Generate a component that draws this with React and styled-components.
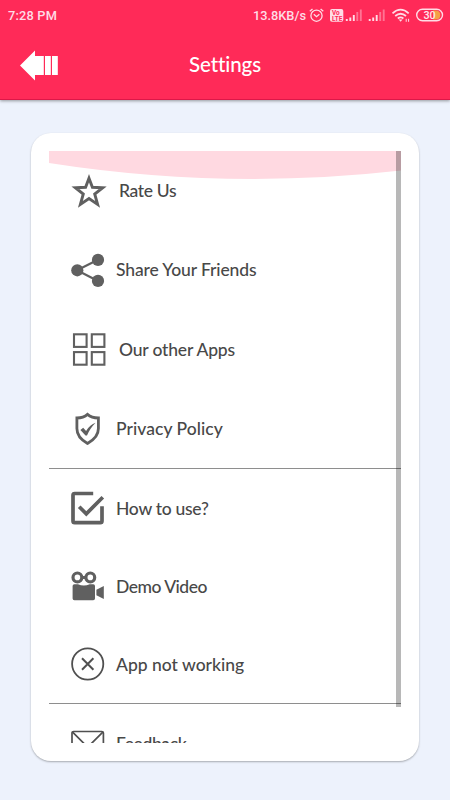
import React from 'react';
import styled, { createGlobalStyle } from 'styled-components';

const iconColor = '#606060';

const GlobalStyle = createGlobalStyle`
  * {
    box-sizing: border-box;
  }
  body {
    margin: 0;
    background: #edf2fc;
  }
`;

const Screen = styled.div`
  display: flex;
  flex-direction: column;
  width: 450px;
  height: 800px;
  overflow: hidden;
  background: #edf2fc;
`;

const Header = styled.header`
  flex: none;
  height: 100px;
  color: #fff;
  background: #ff2a58;
  border-bottom: 1px solid #dc1848;
  box-shadow: 0 1px 3px rgba(0, 0, 0, 0.38);
`;

const StatusBar = styled.div`
  display: flex;
  align-items: center;
  justify-content: space-between;
  height: 30px;
  padding: 0 6px 0 8px;
  color: #ffdce6;
  font-family: Roboto, sans-serif;
  font-size: 12.8px;
  font-weight: 500;
  letter-spacing: 0.2px;
`;

const StatusGroup = styled.div`
  display: flex;
  align-items: center;
  gap: 2px;
  height: 30px;
  letter-spacing: 0;
`;

const Toolbar = styled.div`
  display: grid;
  grid-template-columns: 80px 1fr 80px;
  align-items: center;
  height: 70px;
`;

const BackButton = styled.button`
  display: flex;
  margin: 0;
  padding: 0 0 0 20px;
  border: 0;
  background: none;
`;

const Title = styled.h1`
  margin: 0 0 2px;
  font-family: Lato, sans-serif;
  font-size: 20.5px;
  font-weight: 500;
  font-variant-ligatures: none;
  letter-spacing: -0.1px;
  text-align: center;
`;

const Card = styled.main`
  width: 388px;
  height: 628px;
  margin: 33px 0 0 31px;
  padding: 18px;
  border-radius: 20px;
  background: #fff;
  box-shadow: 0 1px 2px rgba(0, 0, 0, 0.3);
`;

const ScrollArea = styled.div`
  position: relative;
  height: 592px;
  overflow: hidden;
`;

const Wave = styled.svg`
  position: absolute;
  top: 0;
  left: 0;
`;

const ScrollThumb = styled.div`
  position: absolute;
  top: 0;
  right: 0;
  width: 5px;
  height: 556px;
  background: rgba(0, 0, 0, 0.28);
`;

const Group = styled.div`
  position: relative;
  border-bottom: 1px solid #8e8e8e;
`;

const Row = styled.div`
  display: flex;
  align-items: center;
  height: ${props => props.$height}px;
  padding-left: ${props => (props.$inset ? 24 : 22)}px;
`;

const Icon = styled.svg`
  flex: none;
  width: 34px;
  height: 34px;
  overflow: visible;
  color: ${iconColor};
`;

const Label = styled.span`
  margin-left: ${props => (props.$inset ? 12 : 11)}px;
  padding-top: 1px;
  color: #484848;
  font-family: Lato, sans-serif;
  font-size: 17.5px;
  font-weight: 500;
  line-height: 24px;
  letter-spacing: ${props => props.$spacing || 0}px;
  white-space: nowrap;
`;

const StarIcon = () => (
  <Icon viewBox="0 0 34 34" fill="none" stroke="currentColor" strokeWidth="2.9">
    <path d="M16 4.2 L19.4 13.3 L29.7 13.7 L21.7 20 L24.6 30.4 L16 24.6 L7.4 30.4 L10.3 20 L2.4 13.7 L12.6 13.3 Z" />
  </Icon>
);

const ShareIcon = () => (
  <Icon viewBox="0 0 34 34" fill="currentColor">
    <path d="M27 6.8 L6 17.3 L27 28" fill="none" stroke="currentColor" strokeWidth="2.2" />
    <circle cx="27" cy="6.9" r="6.1" />
    <circle cx="6.3" cy="17.3" r="6.1" />
    <circle cx="27" cy="27.9" r="6.1" />
  </Icon>
);

const AppsIcon = () => (
  <Icon viewBox="0 0 34 34" fill="none" stroke="currentColor" strokeWidth="2.1">
    <rect x="1" y="2.3" width="12.6" height="12.6" />
    <rect x="18.8" y="2.3" width="12.6" height="12.6" />
    <rect x="1" y="20.1" width="12.6" height="12.6" />
    <rect x="18.8" y="20.1" width="12.6" height="12.6" />
  </Icon>
);

const ShieldIcon = () => (
  <Icon viewBox="0 0 34 34">
    <path
      d="M16.5 3.4 Q12.5 7 5.9 7 V17.6 C5.9 25 10 29 16.5 32.4 C23 29 27.4 25 27.4 17.6 V7 Q20.6 7 16.5 3.4 Z"
      fill="none"
      stroke="currentColor"
      strokeWidth="2.8"
    />
    <path d="M9.4 18.9 L12.2 16.8 L15.1 19.9 C17.8 15.9 20.8 13.3 24.6 11.8 C21 15.6 18.3 19.3 16 24.4 H14.5 Z" fill="currentColor" />
  </Icon>
);

const CheckIcon = () => (
  <Icon viewBox="0 0 34 34" fill="none" stroke="currentColor" strokeWidth="3.7">
    <path d="M22.2 2.5 H3.7 Q2 2.5 2 4.2 V30 Q2 31.7 3.7 31.7 H29.3 Q31 31.7 31 30 V15.2" />
    <path d="M8.2 15.8 L15.3 22.8 L31.8 6.2" />
  </Icon>
);

const VideoIcon = () => (
  <Icon viewBox="0 0 34 34" fill="currentColor">
    <circle cx="6.4" cy="8.4" r="4.4" fill="none" stroke="currentColor" strokeWidth="3.2" />
    <circle cx="19.3" cy="8.4" r="4.4" fill="none" stroke="currentColor" strokeWidth="3.2" />
    <rect x="11" y="7" width="4" height="3" />
    <path d="M3.4 15.2 H7 Q12.8 17.6 18.7 15.2 H22.2 Q24 15.2 24 17 V29.5 Q24 31.3 22.2 31.3 H3.4 Q1.6 31.3 1.6 29.5 V17 Q1.6 15.2 3.4 15.2 Z" />
    <path d="M25.4 20.7 L32.8 16.9 V29.9 L25.4 26.3 Z" />
  </Icon>
);

const CloseIcon = () => (
  <Icon viewBox="0 0 34 34" fill="none" stroke="#505050" strokeWidth="1.8">
    <circle cx="16.7" cy="17" r="15.6" />
    <path d="M11 11.3 L22.4 22.7 M22.4 11.3 L11 22.7" strokeWidth="2" />
  </Icon>
);

const MailIcon = () => (
  <Icon viewBox="0 0 34 34" fill="none" stroke="#505050" strokeWidth="1.7">
    <rect x="1" y="5.5" width="31.4" height="24" rx="1.6" />
    <path d="M1.6 6.2 L13.5 18 Q16.7 20.8 19.9 18 L31.8 6.2" />
  </Icon>
);

const BackIcon = () => (
  <svg width="38" height="31" viewBox="0 0 38 31" fill="#fff">
    <path d="M0 15.5 L15 0.5 V6 H23.8 V25 H15 V30.5 Z" />
    <rect x="25" y="6" width="5.8" height="19" />
    <rect x="32" y="6" width="5.8" height="19" />
  </svg>
);

const LteText = styled.text`
  font: 700 6.4px Roboto, sans-serif;
  letter-spacing: 0;
  fill: #ff2a58;
`;

const BatteryText = styled.text`
  font: 500 10.8px Roboto, sans-serif;
  letter-spacing: 0;
  fill: #ffe5ea;
`;

const StatusIcons = () => (
  <svg width="136" height="30" viewBox="308 0 136 30" fill="none" stroke="#ffdce6">
    {/* alarm */}
    <circle cx="316.5" cy="15.7" r="5.6" strokeWidth="1.3" />
    <path d="M313.8 14.3 L316.5 16.7 L319.4 14.3 M309.8 11.3 L312.5 9 M320.6 9 L323.3 11.3" strokeWidth="1.3" />
    {/* volte */}
    <rect x="330" y="9" width="13.3" height="12.8" rx="2" fill="#ffdce6" stroke="none" />
    <LteText x="332" y="15" stroke="none">Vo</LteText>
    <LteText x="332" y="20.8" stroke="none">LTE</LteText>
    {/* signal strength */}
    {[346.8, 369.7].map(x => (
      <g key={x} strokeWidth="1.9">
        <path d={`M${x} 21 v-2 M${x + 3.5} 21 v-3.5 M${x + 7} 21 v-6`} />
        <path d={`M${x + 10.5} 21 v-9 M${x + 14} 21 v-11.5`} opacity="0.42" />
      </g>
    ))}
    {/* wifi */}
    <path d="M392.5 13.3 Q400.6 6 408.7 13.3 M395.2 16 Q400.6 11.4 406 16 M397.8 18.5 Q400.6 16.2 403.4 18.5" strokeWidth="1.8" />
    <path d="M398.7 19.6 H402.5 L400.6 21.8 Z" fill="#ffdce6" stroke="none" />
    <path d="M406.2 18.8 v3 M408.6 18.8 v3" strokeWidth="1" />
    {/* battery */}
    <path d="M433 10.6 H436 Q440.3 10.6 440.3 15.1 Q440.3 19.6 436 19.6 H433 Z" fill="#f4a045" stroke="none" />
    <rect x="416.7" y="9.3" width="25.8" height="11.5" rx="5.75" strokeWidth="1.4" />
    <BatteryText x="423.4" y="18.9" stroke="none">30</BatteryText>
  </svg>
);

const mainItems = [
  { label: 'Rate Us', icon: StarIcon, inset: true, spacing: -0.35 },
  { label: 'Share Your Friends', icon: ShareIcon, spacing: -0.12 },
  { label: 'Our other Apps', icon: AppsIcon, inset: true, spacing: -0.18 },
  { label: 'Privacy Policy', icon: ShieldIcon, spacing: 0.05 }
];

const helpItems = [
  { label: 'How to use?', icon: CheckIcon, spacing: -0.28 },
  { label: 'Demo Video', icon: VideoIcon, spacing: -0.5 },
  { label: 'App not working', icon: CloseIcon, spacing: 0 }
];

const MenuItem = ({ label, icon: ItemIcon, inset, spacing, height }) => (
  <Row $height={height} $inset={inset}>
    <ItemIcon />
    <Label $inset={inset} $spacing={spacing}>{label}</Label>
  </Row>
);

export default function App() {
  return (
    <Screen>
      <GlobalStyle />
      <Header>
        <StatusBar>
          <span>7:28 PM</span>
          <StatusGroup>
            <span>13.8KB/s</span>
            <StatusIcons />
          </StatusGroup>
        </StatusBar>
        <Toolbar>
          <BackButton aria-label="Back"><BackIcon /></BackButton>
          <Title>Settings</Title>
        </Toolbar>
      </Header>
      <Card>
        <ScrollArea>
          <Wave width="352" height="29" viewBox="0 0 352 29">
            <path d="M0 0 H352 V19.5 Q176 39.5 0 12 Z" fill="#ffd9e1" />
          </Wave>
          <Group>
            {mainItems.map(item => <MenuItem key={item.label} height={79.25} {...item} />)}
          </Group>
          <Group>
            {helpItems.map(item => <MenuItem key={item.label} height={78} {...item} />)}
          </Group>
          <MenuItem label="Feedback" icon={MailIcon} height={78} spacing={-0.4} />
          <ScrollThumb />
        </ScrollArea>
      </Card>
    </Screen>
  );
}
